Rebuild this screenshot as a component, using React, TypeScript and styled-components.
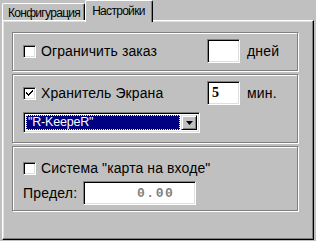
import styled, { createGlobalStyle } from "styled-components";

const GlobalStyle = createGlobalStyle`
  html, body {
    margin: 0;
    padding: 0;
    background: #c0c0c0;
  }
  body {
    font-family: "Liberation Sans", Arial, sans-serif;
    color: #000;
  }
`;

const Window = styled.div`
  width: 316px;
  height: 241px;
  background: #c0c0c0;
  display: flex;
  flex-direction: column;
  padding: 0 2px 1px 2px;
  box-sizing: border-box;
`;

const TabStrip = styled.div`
  display: flex;
  align-items: flex-end;
  height: 20px;
  position: relative;
  z-index: 1;
`;

const Tab = styled.div<{ $active?: boolean }>`
  box-sizing: border-box;
  height: ${(p) => (p.$active ? "22px" : "17px")};
  margin-bottom: ${(p) => (p.$active ? "-2px" : "0")};
  padding: ${(p) => (p.$active ? "3px 7px 0 6px" : "2px 4px 0 5px")};
  font-size: 12px;
  letter-spacing: -0.7px;
  background: #c0c0c0;
  border-top: 1px solid #fff;
  border-left: 1px solid #fff;
  border-right: 1px solid #000;
  border-radius: 2px 2px 0 0;
  box-shadow: inset -1px 0 0 #808080;
  white-space: nowrap;
`;

const Panel = styled.div`
  flex: 1;
  box-sizing: border-box;
  border-top: 1px solid #fff;
  border-left: 1px solid #fff;
  border-right: 1px solid #000;
  border-bottom: 1px solid #000;
  box-shadow: inset -1px -1px 0 #808080, inset 1px 1px 0 #dfdfdf;
  padding: 11px 15px 0 9px;
  display: flex;
  flex-direction: column;
  gap: 3px;
`;

const Group = styled.div<{ $pad: string }>`
  box-sizing: border-box;
  border: 1px solid #808080;
  box-shadow: inset 1px 1px 0 #fff, 1px 1px 0 #fff;
  padding: ${(p) => p.$pad};
  display: flex;
  flex-direction: column;
`;

const Row = styled.div<{ $h: number }>`
  display: grid;
  grid-template-columns: 184px 33px auto;
  align-items: center;
  height: ${(p) => p.$h}px;
`;

const CheckLabel = styled.label`
  display: flex;
  align-items: center;
  gap: 5px;
  font-size: 14px;
  letter-spacing: 0.1px;
  white-space: nowrap;
`;

const Box = styled.span`
  box-sizing: border-box;
  width: 13px;
  height: 13px;
  background: #fff;
  border-top: 1px solid #808080;
  border-left: 1px solid #808080;
  border-right: 1px solid #fff;
  border-bottom: 1px solid #fff;
  box-shadow: inset 1px 1px 0 #000, inset -1px -1px 0 #dfdfdf;
  display: flex;
  align-items: center;
  justify-content: center;
`;

const Sunken = styled.div<{ $w: number; $h: number }>`
  box-sizing: border-box;
  width: ${(p) => p.$w}px;
  height: ${(p) => p.$h}px;
  background: #fff;
  border-top: 1px solid #808080;
  border-left: 1px solid #808080;
  border-right: 1px solid #fff;
  border-bottom: 1px solid #fff;
  box-shadow: inset 1px 1px 0 #000, inset -1px -1px 0 #dfdfdf;
  display: flex;
  align-items: center;
`;

const EditValue = styled.span`
  font-family: "Liberation Serif", serif;
  font-weight: bold;
  font-size: 14px;
  padding-left: 4px;
`;

const Unit = styled.span`
  font-size: 14px;
  letter-spacing: 0.2px;
  padding-left: 7px;
`;

const Combo = styled.div`
  margin-top: 7px;
  box-sizing: border-box;
  width: 177px;
  height: 21px;
  background: #fff;
  border-top: 1px solid #808080;
  border-left: 1px solid #808080;
  border-right: 1px solid #fff;
  border-bottom: 1px solid #fff;
  box-shadow: inset 1px 1px 0 #000, inset -1px -1px 0 #dfdfdf;
  padding: 2px;
  display: flex;
`;

const ComboText = styled.div`
  flex: 1;
  background: #000080;
  color: #fff;
  font-size: 12.5px;
  letter-spacing: -0.2px;
  line-height: 15px;
  padding-left: 2px;
  outline: 1px dotted #ffff80;
  outline-offset: -1px;
  margin-right: 1px;
`;

const ComboButton = styled.div`
  box-sizing: border-box;
  width: 16px;
  background: #c0c0c0;
  border-top: 1px solid #dfdfdf;
  border-left: 1px solid #dfdfdf;
  border-right: 1px solid #000;
  border-bottom: 1px solid #000;
  box-shadow: inset 1px 1px 0 #fff, inset -1px -1px 0 #808080;
  display: flex;
  align-items: center;
  justify-content: center;
`;

const LimitRow = styled.div`
  display: flex;
  align-items: center;
  margin-top: 5px;
  gap: 6px;
`;

const LimitLabel = styled.span`
  font-size: 14px;
  letter-spacing: 0.2px;
`;

const LimitValue = styled.span`
  flex: 1;
  text-align: right;
  padding-right: 21px;
  font-family: "Liberation Mono", monospace;
  font-weight: bold;
  font-size: 13px;
  letter-spacing: 1.5px;
  color: #808080;
`;

const Check = ({ checked }: { checked?: boolean }) => (
  <Box>
    {checked && (
      <svg width="7" height="7" viewBox="0 0 7 7">
        <path d="M0 2h1v1h1v1h1V3h1V2h1V1h1V0h1v2H6v1H5v1H4v1H3v1H2V5H1V4H0z" fill="#000" />
      </svg>
    )}
  </Box>
);

export default function App() {
  return (
    <Window>
      <GlobalStyle />
      <TabStrip>
        <Tab>Конфигурация</Tab>
        <Tab $active>Настройки</Tab>
      </TabStrip>
      <Panel>
        <Group $pad="6px 0 7px 10px">
          <Row $h={24}>
            <CheckLabel>
              <Check />
              Ограничить заказ
            </CheckLabel>
            <Sunken $w={33} $h={24} />
            <Unit>дней</Unit>
          </Row>
        </Group>
        <Group $pad="6px 0 9px 10px">
          <Row $h={24}>
            <CheckLabel>
              <Check checked />
              Хранитель Экрана
            </CheckLabel>
            <Sunken $w={33} $h={24}>
              <EditValue>5</EditValue>
            </Sunken>
            <Unit>мин.</Unit>
          </Row>
          <Combo>
            <ComboText>"R-KeepeR"</ComboText>
            <ComboButton>
              <svg width="7" height="4" viewBox="0 0 7 4">
                <path d="M0 0h7L3.5 4z" fill="#000" />
              </svg>
            </ComboButton>
          </Combo>
        </Group>
        <Group $pad="13px 0 5px 10px">
          <CheckLabel>
            <Check />
            Система "карта на входе"
          </CheckLabel>
          <LimitRow>
            <LimitLabel>Предел:</LimitLabel>
            <Sunken $w={113} $h={24}>
              <LimitValue>0.00</LimitValue>
            </Sunken>
          </LimitRow>
        </Group>
      </Panel>
    </Window>
  );
}
